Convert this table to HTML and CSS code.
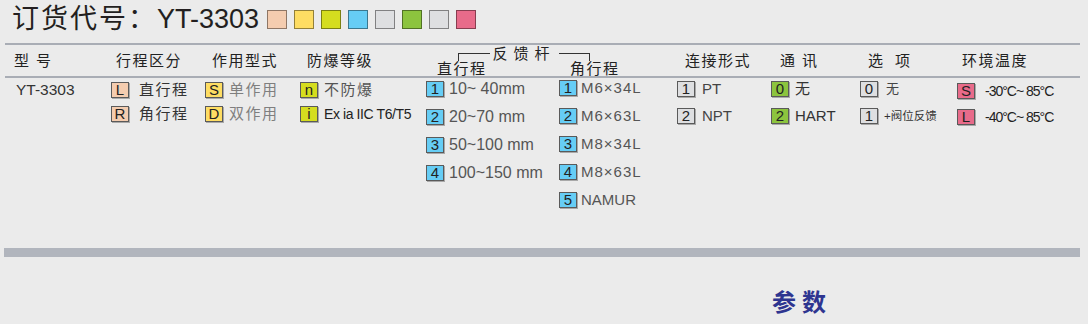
FILE: index.html
```html
<!DOCTYPE html>
<html lang="zh-CN">
<head>
<meta charset="utf-8">
<title>订货代号 YT-3303</title>
<link rel="stylesheet" href="styles.css">
</head>
<body>
<div class="page">
  <header class="title">
    <h1 class="title-text"><span class="cn">订货代号：</span>YT-3303</h1>
    <div class="swatches">
      <span class="sw peach"></span>
      <span class="sw yellow"></span>
      <span class="sw lime"></span>
      <span class="sw blue"></span>
      <span class="sw gray"></span>
      <span class="sw green"></span>
      <span class="sw gray"></span>
      <span class="sw pink"></span>
    </div>
  </header>

  <section class="spec">
    <div class="head">
      <div class="h h1"><span class="wide7">型号</span></div>
      <div class="h h2">行程区分</div>
      <div class="h h3">作用型式</div>
      <div class="h h4">防爆等级</div>
      <div class="h feedback">
        <div class="bracket">
          <span class="bl"></span>
          <span class="bt">反馈杆</span>
          <span class="br"></span>
        </div>
        <div class="subs">
          <span class="sub">直行程</span>
          <span class="sub">角行程</span>
        </div>
      </div>
      <div class="h h7">连接形式</div>
      <div class="h h8"><span class="wide7">通讯</span></div>
      <div class="h h9"><span class="wide12">选项</span></div>
      <div class="h h10">环境温度</div>
    </div>

    <div class="body">
      <div class="col c1">
        <div class="item"><span class="t model">YT-3303</span></div>
      </div>
      <div class="col c2">
        <div class="item"><span class="box peach">L</span><span class="t cjk">直行程</span></div>
        <div class="item"><span class="box peach">R</span><span class="t cjk">角行程</span></div>
      </div>
      <div class="col c3">
        <div class="item"><span class="box yellow">S</span><span class="t cjk">单作用</span></div>
        <div class="item"><span class="box yellow">D</span><span class="t cjk">双作用</span></div>
      </div>
      <div class="col c4">
        <div class="item"><span class="box lime">n</span><span class="t cjk">不防爆</span></div>
        <div class="item"><span class="box lime">i</span><span class="t ex">Ex ia IIC T6/T5</span></div>
      </div>
      <div class="col c5">
        <div class="item"><span class="box blue">1</span><span class="t">10~ 40mm</span></div>
        <div class="item"><span class="box blue">2</span><span class="t">20~70 mm</span></div>
        <div class="item"><span class="box blue">3</span><span class="t">50~100 mm</span></div>
        <div class="item"><span class="box blue">4</span><span class="t">100~150 mm</span></div>
      </div>
      <div class="col c6">
        <div class="item"><span class="box blue">1</span><span class="t">M6×34L</span></div>
        <div class="item"><span class="box blue">2</span><span class="t">M6×63L</span></div>
        <div class="item"><span class="box blue">3</span><span class="t">M8×34L</span></div>
        <div class="item"><span class="box blue">4</span><span class="t">M8×63L</span></div>
        <div class="item"><span class="box blue">5</span><span class="t namur">NAMUR</span></div>
      </div>
      <div class="col c7">
        <div class="item"><span class="box gray">1</span><span class="t">PT</span></div>
        <div class="item"><span class="box gray">2</span><span class="t">NPT</span></div>
      </div>
      <div class="col c8">
        <div class="item"><span class="box green">0</span><span class="t">无</span></div>
        <div class="item"><span class="box green">2</span><span class="t">HART</span></div>
      </div>
      <div class="col c9">
        <div class="item"><span class="box gray">0</span><span class="t none">无</span></div>
        <div class="item"><span class="box gray">1</span><span class="t small">+阀位反馈</span></div>
      </div>
      <div class="col c10">
        <div class="item"><span class="box pink">S</span><span class="t temp">-30°C~ 85°C</span></div>
        <div class="item"><span class="box pink">L</span><span class="t temp">-40°C~ 85°C</span></div>
      </div>
    </div>
  </section>

  <div class="bar"></div>
  <div class="param">参数</div>
</div>
</body>
</html>
```

FILE: styles.css
```css
* { box-sizing: border-box; }

html, body {
  margin: 0;
  padding: 0;
  background: #ebebeb;
}

body {
  font-family: "Liberation Sans", "Noto Sans CJK SC", sans-serif;
  color: #333;
  width: 1088px;
  height: 324px;
  overflow: hidden;
}

.page {
  display: flex;
  flex-direction: column;
}

/* ---------- Title ---------- */
.title {
  height: 39px;
  margin-bottom: 4px;
  display: flex;
  align-items: center;
  padding-left: 12px;
}

.title-text {
  margin: 0;
  font-size: 27px;
  line-height: 27px;
  font-weight: 400;
  color: #231f20;
}

.title-text .cn {
  letter-spacing: 2px;
}

.swatches {
  display: flex;
  gap: 7px;
  margin-left: 8px;
}

.sw {
  width: 20px;
  height: 19px;
  border: 1px solid rgba(0, 0, 0, 0.42);
}

.peach  { background: #f4ccaf; }
.yellow { background: #fedd63; }
.lime   { background: #d5dd1f; }
.blue   { background: #66cdf5; }
.gray   { background: #dedfe1; }
.green  { background: #8cc43e; }
.pink   { background: #e86b8a; }

/* ---------- Spec table ---------- */
.spec {
  margin-left: 5px;
  width: 1075px;
  border-top: 2px solid #a9adb5;
}

.head,
.body {
  display: grid;
  grid-template-columns: 106px 94px 95px 126px 133px 118px 94px 89px 97px 123px;
}

.head {
  height: 33px;
  border-bottom: 2px solid #a9adb5;
}

.h {
  font-size: 15px;
  line-height: 31px;
  letter-spacing: 1.5px;
  color: #222;
  white-space: nowrap;
}

.h1 { padding-left: 9px; }
.h2 { padding-left: 5px; }
.h3 { padding-left: 7px; }
.h4 { padding-left: 7px; }
.h7 { padding-left: 8px; }
.h8 { padding-left: 9px; }
.h9 { padding-left: 8px; }
.h10 { padding-left: 5px; }

.wide7 { letter-spacing: 7px; }
.wide12 { letter-spacing: 12px; }

.feedback {
  grid-column: span 2;
  line-height: normal;
  display: flex;
  flex-direction: column;
}

.bracket {
  display: flex;
  align-items: flex-start;
  margin-top: 1px;
  margin-left: 32px;
  width: 132px;
  height: 15px;
}

.bl,
.br {
  flex: 1;
  height: 8px;
  margin-top: 7px;
  border-top: 1px solid #333;
}

.bl { border-left: 1px solid #333; }
.br { border-right: 1px solid #333; }

.bt {
  padding: 0 3px;
  font-size: 15px;
  line-height: 15px;
  letter-spacing: 6px;
  margin-right: -6px;
  padding-right: 9px;
}

.subs {
  display: grid;
  grid-template-columns: 133px 118px;
  font-size: 15px;
  line-height: 15px;
}

.sub { padding-left: 11px; }

/* ---------- Body ---------- */
.body {
  height: 170px;
}

.col {
  display: flex;
  flex-direction: column;
}

.item {
  display: flex;
  align-items: center;
  height: 18px;
  white-space: nowrap;
}

.box {
  flex: none;
  width: 18px;
  height: 16px;
  border: 1px solid #5a5a5a;
  box-shadow: 1px 1px 0 #a9a9a9;
  font-size: 15px;
  line-height: 14px;
  text-align: center;
  color: #222;
}

.t {
  font-size: 16px;
  line-height: 18px;
  color: #555;
}

.cjk {
  font-size: 15px;
  letter-spacing: 1.5px;
}

.c1 { padding: 3px 0 0 11px; }
.c1 .model { font-size: 15.5px; color: #333; }

.c2 { padding-top: 3px; gap: 6px; }
.c2 .item { gap: 10px; }
.c2 .t { color: #333; }

.c3 { padding-top: 3px; gap: 6px; }
.c3 .item { gap: 6px; }
.c3 .t { color: #7f7f7f; }

.c4 { padding-top: 3px; gap: 6px; }
.c4 .item { gap: 6px; }
.c4 .t { color: #555; }
.c4 .ex {
  font-size: 14px;
  letter-spacing: -0.4px;
  color: #222;
}

.c5 { padding-top: 2px; gap: 10px; }
.c5 .item { gap: 5px; }

.c6 { padding-top: 1px; gap: 10px; }
.c6 .item { gap: 4px; }
.c6 .t { font-size: 15px; letter-spacing: 1px; }
.c6 .namur { letter-spacing: 0; }

.c7 { padding-top: 2px; gap: 9px; }
.c7 .item { gap: 7px; }
.c7 .t { font-size: 15px; color: #444; }

.c8 { padding-top: 2px; gap: 9px; }
.c8 .item { gap: 6px; }
.c8 .t { font-size: 15px; color: #333; }

.c9 { padding-top: 2px; gap: 9px; }
.c9 .item { gap: 6px; }
.c9 .none { font-size: 13px; color: #444; margin-left: 2px; }
.c9 .small { font-size: 11.5px; color: #333; }

.c10 { padding-top: 4px; gap: 8px; }
.c10 .item { gap: 10px; }
.c10 .temp {
  font-size: 14px;
  letter-spacing: -1px;
  color: #222;
}

/* ---------- Footer ---------- */
.bar {
  margin-left: 4px;
  width: 1076px;
  height: 9px;
  background: #b1b5bd;
}

.param {
  margin-top: 34px;
  padding-left: 772px;
  font-size: 24px;
  line-height: 24px;
  font-weight: 700;
  letter-spacing: 6px;
  color: #2e3590;
}
```
